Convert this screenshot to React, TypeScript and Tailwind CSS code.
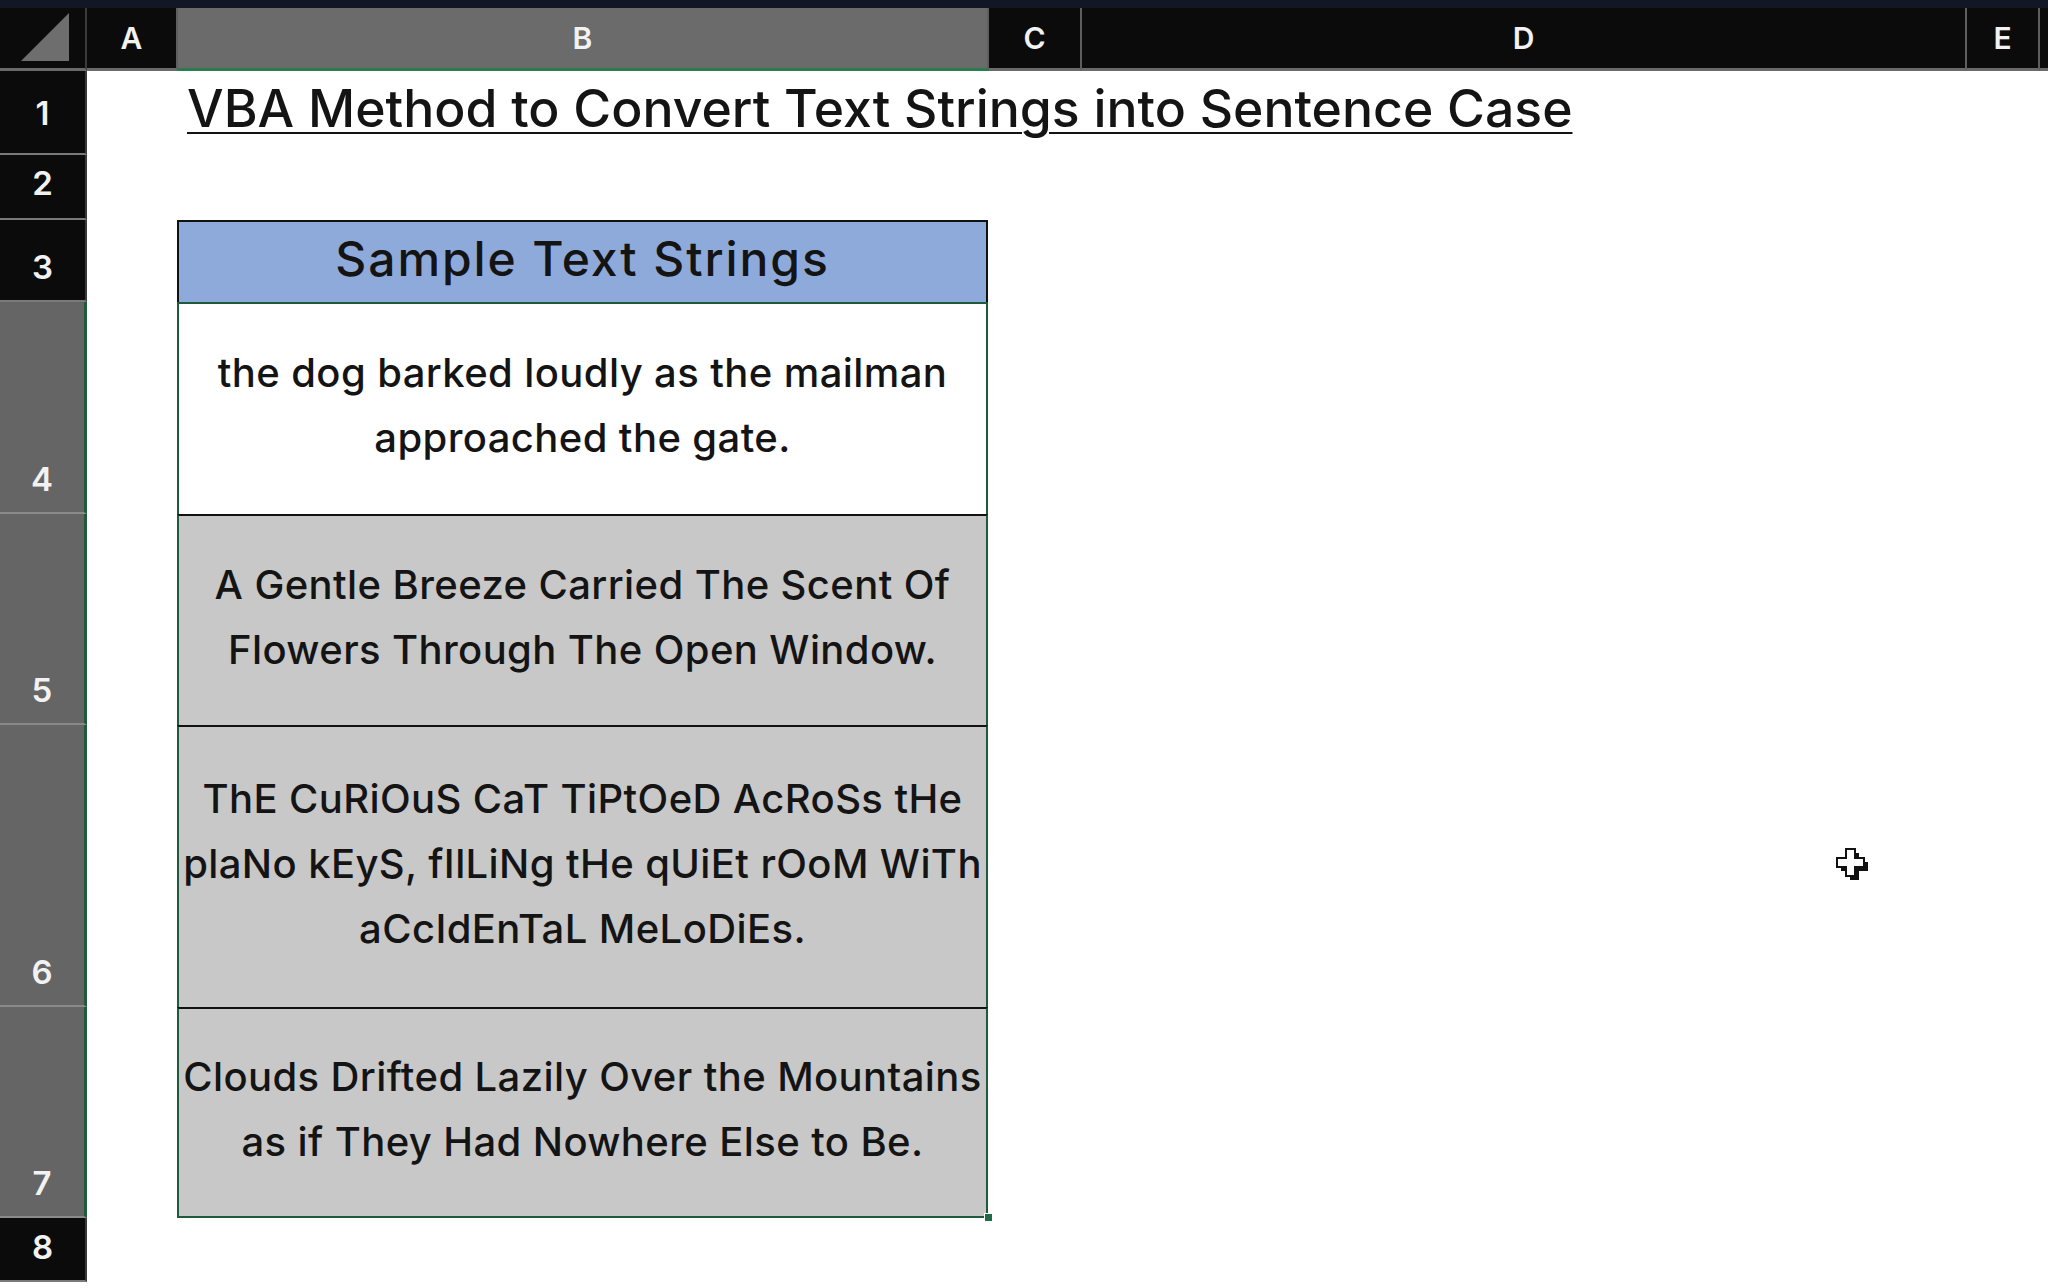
import React from 'react';

const font = { fontFamily: 'Inter, "Noto Sans", sans-serif' };

type Row = { n: number; h: string; pb: string; selected?: boolean };

const rows: Row[] = [
  { n: 1, h: 'h-[84px]', pb: 'pb-[15px]' },
  { n: 2, h: 'h-[65px]', pb: 'pb-[10px]' },
  { n: 3, h: 'h-[82px]', pb: 'pb-[8px]' },
  { n: 4, h: 'h-[212px]', pb: 'pb-[8px]', selected: true },
  { n: 5, h: 'h-[211px]', pb: 'pb-[8px]', selected: true },
  { n: 6, h: 'h-[282px]', pb: 'pb-[8px]', selected: true },
  { n: 7, h: 'h-[211px]', pb: 'pb-[8px]', selected: true },
  { n: 8, h: 'h-[64px]', pb: 'pb-[8px]' },
];

const samples: Record<number, string[]> = {
  4: ['the dog barked loudly as the mailman', 'approached the gate.'],
  5: ['A Gentle Breeze Carried The Scent Of', 'Flowers Through The Open Window.'],
  6: ['ThE CuRiOuS CaT TiPtOeD AcRoSs tHe', 'plaNo kEyS, fIlLiNg tHe qUiEt rOoM WiTh', 'aCcIdEnTaL MeLoDiEs.'],
  7: ['Clouds Drifted Lazily Over the Mountains', 'as if They Had Nowhere Else to Be.'],
};

function ColHeader({ label, w, selected }: { label: string; w: string; selected?: boolean }) {
  return (
    <div
      className={`${w} shrink-0 h-full flex items-center justify-center border-r-2 border-r-[#5e5e5e] border-b-[3px] text-[30px] font-semibold text-[#f2f2f2] ${
        selected ? 'bg-[#6b6b6b] border-b-[#2c7a50]' : 'bg-[#0b0b0b] border-b-[#6a6a6a]'
      }`}
    >
      {label}
    </div>
  );
}

function TableCell({ n }: { n: number }) {
  const lines = samples[n];
  const edge =
    n === 4
      ? 'border-x-2 border-t-2 border-[#1f5a3c] bg-white'
      : n === 7
      ? 'border-x-2 border-b-2 border-[#1f5a3c] border-t-2 border-t-[#111] bg-[#c8c8c8]'
      : 'border-x-2 border-[#1f5a3c] border-t-2 border-t-[#111] bg-[#c8c8c8]';
  return (
    <div className={`w-[811px] shrink-0 h-full flex flex-col items-center justify-center pb-[8px] ${edge}`}>
      {lines.map((l) => (
        <div key={l} className="text-[40px] tracking-[0.4px] leading-[65px] font-medium text-[#141414] whitespace-nowrap">
          {l}
        </div>
      ))}
    </div>
  );
}

export default function App() {
  return (
    <div className="w-[2048px] h-[1288px] overflow-hidden bg-white relative" style={font}>
      <div className="h-[8px] bg-[#111725]" />

      <div className="flex h-[63px] bg-[#0b0b0b]">
        <div className="w-[87px] shrink-0 h-full bg-[#0b0b0b] border-r-2 border-r-[#3a3a3a] border-b-[3px] border-b-[#6a6a6a] flex items-center justify-center">
          <svg width="60" height="52" viewBox="0 0 60 52">
            <polygon points="8,49 56,1 56,49" fill="#6e6e6e" />
          </svg>
        </div>
        <ColHeader label="A" w="w-[91px]" />
        <ColHeader label="B" w="w-[811px]" selected />
        <ColHeader label="C" w="w-[93px]" />
        <ColHeader label="D" w="w-[885px]" />
        <ColHeader label="E" w="w-[73px]" />
        <div className="flex-1 h-full bg-[#0b0b0b] border-b-[3px] border-b-[#6a6a6a]" />
      </div>

      {rows.map((r) => (
        <div key={r.n} className={`flex ${r.h}`}>
          <div
            className={`w-[87px] shrink-0 h-full flex items-end justify-center ${r.pb} border-b-2 text-[33px] font-semibold text-[#f2f2f2] ${
              r.selected
                ? 'bg-[#656565] border-b-[#8a8a8a] border-r-[3px] border-r-[#1f5a3c]'
                : 'bg-[#0b0b0b] border-b-[#7a7a7a] border-r-2 border-r-[#3a3a3a]'
            }`}
          >
            {r.n}
          </div>
          <div className="w-[90px] shrink-0 h-full" />
          {r.n === 1 && (
            <div className="h-full flex items-end pb-[20px] pl-[10px] whitespace-nowrap">
              <span className="text-[51.7px] leading-none font-medium text-[#141414] underline decoration-2 underline-offset-[5px]">
                VBA Method to Convert Text Strings into Sentence Case
              </span>
            </div>
          )}
          {r.n === 3 && (
            <div className="w-[811px] shrink-0 h-full bg-[#8eaadb] border-x-2 border-t-2 border-[#111] flex items-center justify-center pb-[6px]">
              <span className="text-[48px] tracking-[1.9px] font-medium text-[#141414]">Sample Text Strings</span>
            </div>
          )}
          {samples[r.n] && <TableCell n={r.n} />}
        </div>
      ))}

      {/* fill handle of the selection */}
      <div className="absolute left-[984px] top-[1213px] w-[9px] h-[9px] bg-[#1f6b45] border border-white" />

      {/* mouse cursor */}
      <svg className="absolute left-[1834px] top-[846px]" width="36" height="36" viewBox="0 0 36 36">
        <path d="M14 5h9v9h9v9h-9v9h-9v-9H5v-9h9z" fill="#111" transform="translate(2 2)" />
        <path d="M12 3h9v9h9v9h-9v9h-9v-9H3v-9h9z" fill="#fff" stroke="#111" strokeWidth="2" />
      </svg>
    </div>
  );
}
